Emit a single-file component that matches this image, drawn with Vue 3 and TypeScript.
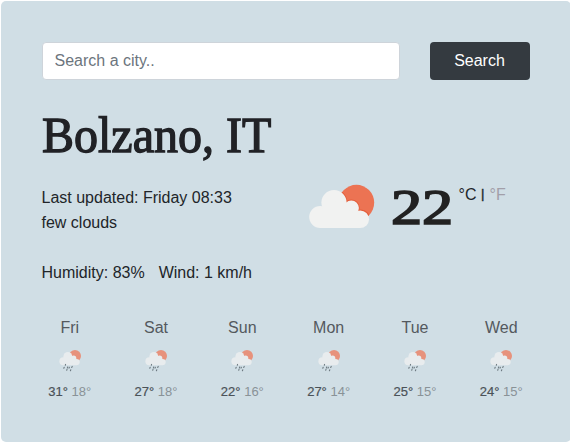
<script setup lang="ts">
import { ref } from 'vue'

interface ForecastDay {
  day: string
  high: number
  low: number
}

const query = ref('')
const forecast: ForecastDay[] = [
  { day: 'Fri', high: 31, low: 18 },
  { day: 'Sat', high: 27, low: 18 },
  { day: 'Sun', high: 22, low: 16 },
  { day: 'Mon', high: 27, low: 14 },
  { day: 'Tue', high: 25, low: 15 },
  { day: 'Wed', high: 24, low: 15 },
]
</script>

<template>
  <main class="weather">
    <form class="search" @submit.prevent>
      <input v-model="query" class="field" type="text" placeholder="Search a city.." />
      <button class="submit" type="submit">Search</button>
    </form>
    <h1 class="city"><span class="city-name">Bolzano, IT</span></h1>
    <section class="current">
      <div class="details">
        <div>Last updated: Friday 08:33</div>
        <div>few clouds</div>
        <div class="stats"><span>Humidity: 83%</span><span>Wind: 1 km/h</span></div>
      </div>
      <svg class="icon" viewBox="0 0 66 45" width="66" height="45">
        <defs>
          <clipPath id="sun"><circle cx="47.4" cy="18.6" r="17.8" /></clipPath>
        </defs>
        <circle cx="47.4" cy="18.6" r="17.8" fill="#ec7353" />
        <g fill="#e35f3c" clip-path="url(#sun)">
          <circle cx="25" cy="18.6" r="13.4" />
          <circle cx="42.3" cy="23.8" r="8.4" />
          <circle cx="51.8" cy="35.3" r="9.7" />
        </g>
        <g fill="#f1f2f1">
          <circle cx="11.2" cy="33" r="11" />
          <circle cx="25" cy="18.6" r="12.6" />
          <circle cx="42.3" cy="24" r="7.6" />
          <circle cx="51.2" cy="35.2" r="8.8" />
          <path d="M11 44V26l14-9 17 10 9 8v9Z" />
        </g>
      </svg>
      <div class="temperature"><span class="degrees">22</span></div>
      <div class="units">°C <span class="bar">|</span> <span class="inactive">°F</span></div>
    </section>
    <section class="forecast">
      <div v-for="item in forecast" :key="item.day" class="day">
        <div class="name">{{ item.day }}</div>
        <svg class="small-icon" viewBox="0 0 24 24" width="24" height="24">
          <circle cx="17" cy="7" r="6" fill="#e7927c" />
          <g fill="#e8ecee">
            <circle cx="5.4" cy="12.2" r="4" />
            <circle cx="9.8" cy="7.4" r="4.4" />
            <circle cx="15.6" cy="9.2" r="2.7" />
            <circle cx="18.6" cy="13" r="3.1" />
            <path d="M5 16.2V9l5-3 6 3 3 4v3.2Z" />
          </g>
          <path d="M7.6 15.4l-.3 .8M6.2 18.2l-.4 1M9.8 17.9l-.5 1.2M9 20.5l-.3 .8M11.4 18.2l-.4 .9M14.2 17.4l-.5 1M12.8 20.7l-.4 1" stroke="#6d7980" stroke-width="1.1" stroke-linecap="round" />
        </svg>
        <div class="range"><span class="high">{{ item.high }}°</span> <span class="low">{{ item.low }}°</span></div>
      </div>
    </section>
  </main>
</template>

<style>
body {
  background: #fff;
}
</style>

<style scoped>
.weather {
  box-sizing: border-box;
  width: 570px;
  height: 441px;
  margin: 1px 0 1px 1px;
  padding: 41px 40px 0 41px;
  overflow: hidden;
  border-radius: 5px;
  background: #d0dee5;
  color: #212529;
  font: 16px/25px "Liberation Sans", Arial, sans-serif;
}
.search {
  display: flex;
  gap: 30px;
  height: 38px;
}
.field {
  box-sizing: border-box;
  width: 358px;
  padding: 0 12px 1px 11.5px;
  border: 1px solid #ced4da;
  border-radius: 4px;
  background: #fff;
  color: #495057;
  font: inherit;
}
.field::placeholder {
  color: #6c757d;
  opacity: 1;
}
.submit {
  width: 100px;
  padding: 0 1px 2px 0;
  border: 0;
  border-radius: 4px;
  background: #343a40;
  color: #fff;
  font: inherit;
}
.city {
  height: 60px;
  margin: 25px 0 20px;
  color: #212226;
  font: 400 50px/60px "Liberation Serif", serif;
}
.city-name {
  display: inline-block;
  transform: scaleX(0.96);
  transform-origin: left;
  -webkit-text-stroke: 1.3px #212226;
}
.current {
  display: flex;
  height: 100px;
}
.details {
  width: 267.5px;
  margin-left: -0.5px;
}
.stats {
  display: flex;
  gap: 14px;
  margin-top: 25px;
}
.icon {
  flex: none;
  margin-top: -1px;
}
.temperature {
  width: 66px;
  margin: -4px 0 0 16px;
  color: #222;
  font: 400 51px/52px "Liberation Serif", serif;
}
.degrees {
  display: inline-block;
  transform: scaleX(1.22);
  transform-origin: left;
  -webkit-text-stroke: 1.7px #222;
}
.units {
  margin: -3px 0 0 1.5px;
  white-space: nowrap;
}
.bar {
  display: inline-block;
  width: 4.2px;
  font-size: 13px;
  line-height: 12px;
  vertical-align: 2px;
  -webkit-text-stroke: 0.4px #212529;
}
.inactive {
  color: #a29fa9;
}
.forecast {
  display: grid;
  grid-template-columns: repeat(6, 86.3px);
  margin: 30px 0 0 -15.4px;
  text-align: center;
}
.name {
  color: #54595e;
}
.small-icon {
  display: block;
  margin: 9px auto 0;
}
.range {
  margin-top: 7px;
  font-size: 13px;
  line-height: 24px;
}
.high {
  color: #4b5258;
  -webkit-text-stroke: 0.2px #4b5258;
}
.low {
  color: #899297;
}
</style>
